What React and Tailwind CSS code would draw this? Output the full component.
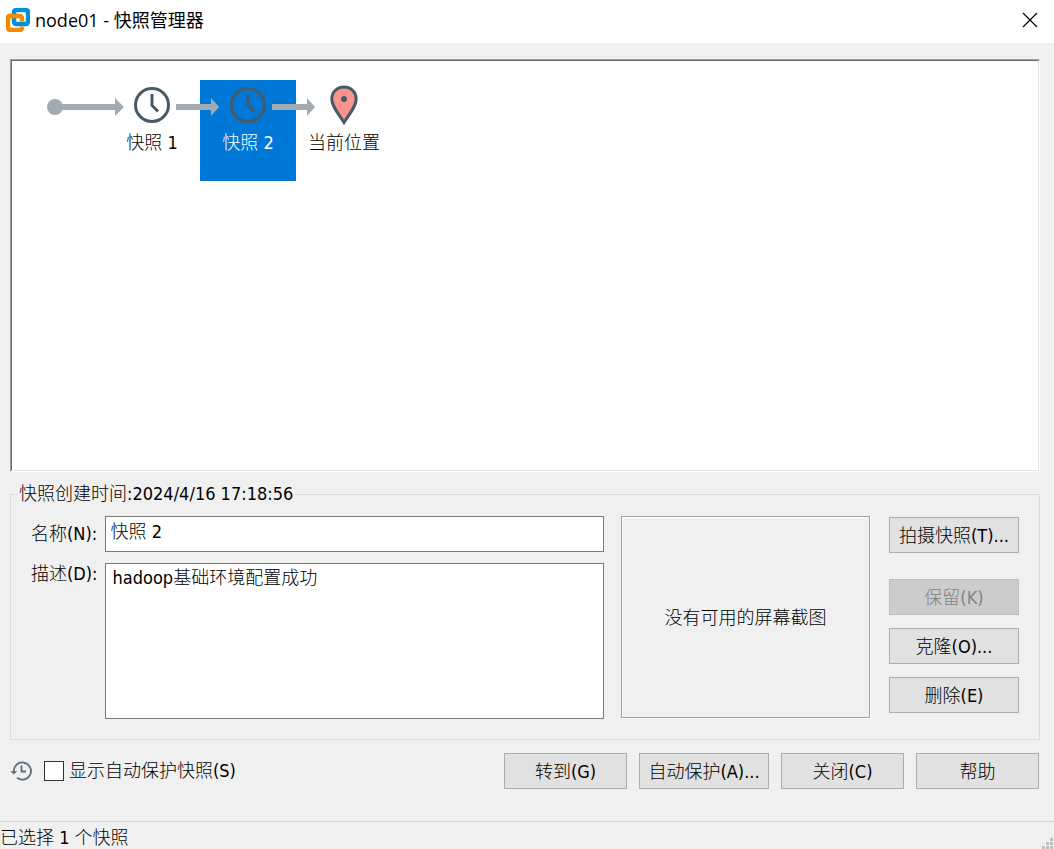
const SNAPSHOTS = [
  { id: "s1", label: "快照 1", icon: "clock", arrow: "start" },
  { id: "s2", label: "快照 2", icon: "clock", arrow: "next", selected: true },
  { id: "here", label: "当前位置", icon: "pin", arrow: "next" },
];

function Logo() {
  return (
    <svg className="size-6 shrink-0" viewBox="0 0 24 24" fill="none" aria-hidden="true">
      <rect x="2" y="8" width="14" height="14" rx="2" stroke="#f38b00" strokeWidth="4.4" />
      <rect x="8" y="2" width="14" height="14" rx="2" stroke="#fff" strokeOpacity="0.6" strokeWidth="6" />
      <rect x="8" y="2" width="14" height="14" rx="2" stroke="#0091da" strokeWidth="4.4" />
      <path d="M2 14V10Q2 8 4 8H12" stroke="#f38b00" strokeWidth="4.4" />
    </svg>
  );
}

function ClockIcon() {
  return (
    <svg className="size-10" viewBox="0 0 40 40" fill="none" stroke="#485a66" strokeWidth="3" aria-hidden="true">
      <circle cx="20" cy="20" r="16.5" />
      <path d="M20 9V20.5L26 26.5" />
    </svg>
  );
}

function PinIcon() {
  return (
    <svg className="size-10" viewBox="0 0 40 40" aria-hidden="true">
      <path
        d="M20 2C12.8 2 7.8 7.2 7.8 14C7.8 21 13.5 27.5 20 37.5C26.5 27.5 32.2 21 32.2 14C32.2 7.2 27.2 2 20 2Z"
        fill="#fc948e"
        stroke="#485a66"
        strokeWidth="3"
      />
      <circle cx="20" cy="14" r="3" fill="#485a66" />
    </svg>
  );
}

function Arrow({ kind }) {
  if (kind === "start") {
    return (
      <svg className="absolute top-4 right-[76px] z-10 h-[22px] w-[77px]" viewBox="0 0 77 22" fill="#a3abb2" aria-hidden="true">
        <circle cx="8" cy="11" r="8" />
        <path d="M8 8H68V2L77 11L68 20V14H8Z" />
      </svg>
    );
  }
  return (
    <svg className="absolute top-4 -left-6 z-10 h-[22px] w-11" viewBox="0 0 44 22" fill="#a3abb2" aria-hidden="true">
      <path d="M0 8H35V2L43 11L35 20V14H0Z" />
    </svg>
  );
}

function Button({ className = "", ...props }) {
  return (
    <button
      type="button"
      className={`h-9 border border-[#adadad] bg-[#e1e1e1] pt-0.5 text-center whitespace-nowrap disabled:border-[#bfbfbf] disabled:bg-[#cccccc] disabled:text-[#838383] ${className}`}
      {...props}
    />
  );
}

export default function App() {
  return (
    <div className="flex min-h-screen flex-col bg-[#f0f0f0] font-['DejaVu_Sans_Condensed','Noto_Sans_CJK_SC',sans-serif] text-[18px] leading-5 font-light text-black">
      <header className="flex h-[43px] items-center bg-white pr-4 pb-[3px] pl-1.5">
        <Logo />
        <h1 className="ml-[5px] flex-1 font-['Open_Sans','Noto_Sans_CJK_SC',sans-serif] text-[18px] leading-6 font-normal">
          node01 - 快照管理器
        </h1>
        <button type="button" aria-label="关闭窗口" className="size-4">
          <svg className="size-4" viewBox="0 0 16 16" stroke="#000" strokeWidth="1.2" aria-hidden="true">
            <path d="M1 1L15 15M15 1L1 15" />
          </svg>
        </button>
      </header>

      <main className="flex flex-1 flex-col pt-4 pr-[14px] pl-2.5">
        <section className="border border-t-[#a0a0a0] border-r-white border-b-white border-l-[#a0a0a0]">
          <ul className="flex h-[411px] border border-t-[#696969] border-r-[#e3e3e3] border-b-[#e3e3e3] border-l-[#696969] bg-white pt-[19px] pl-[92px]">
            {SNAPSHOTS.map((s) => (
              <li
                key={s.id}
                className={`relative flex h-[101px] w-24 flex-col items-center gap-2 pt-[5px] ${s.selected ? "bg-[#0078d7] text-white" : ""}`}
              >
                <Arrow kind={s.arrow} />
                {s.icon === "clock" ? <ClockIcon /> : <PinIcon />}
                <span className="whitespace-nowrap">{s.label}</span>
              </li>
            ))}
          </ul>
        </section>

        <fieldset className="mt-3 border border-[#dcdcdc] pt-3 pr-5 pb-5 pl-5">
          <legend className="-ml-[13px] px-px">快照创建时间:2024/4/16 17:18:56</legend>
          <div className="flex">
            <div className="grid flex-1 grid-cols-[auto_1fr] gap-x-[7px] gap-y-[11px]">
              <label htmlFor="name" className="pt-2">名称(N):</label>
              <input
                id="name"
                defaultValue="快照 2"
                className="h-9 w-full min-w-0 border border-[#7a7a7a] bg-white px-[5px] pb-2 outline-none"
              />
              <label htmlFor="desc" className="pt-px">描述(D):</label>
              <textarea
                id="desc"
                defaultValue="hadoop基础环境配置成功"
                className="h-[156px] w-full min-w-0 resize-none border border-[#7a7a7a] bg-white px-[7px] py-1 outline-none"
              />
            </div>
            <div className="ml-[17px] flex h-[202px] w-[249px] items-center justify-center border border-[#a0a0a0] pt-0.5 shadow-[1px_1px_0_#fff,inset_1px_1px_0_#fff]">
              没有可用的屏幕截图
            </div>
            <div className="ml-[19px] flex w-[130px] flex-col gap-[13px] pt-px">
              <Button className="mb-[13px]">拍摄快照(T)...</Button>
              <Button disabled>保留(K)</Button>
              <Button>克隆(O)...</Button>
              <Button>删除(E)</Button>
            </div>
          </div>
        </fieldset>

        <div className="mt-[13px] mr-px flex items-center gap-3">
          <svg className="size-[22px] shrink-0" viewBox="0 0 22 22" fill="none" stroke="#5f6b76" strokeWidth="1.8" aria-hidden="true">
            <path d="M3.8 12A8.6 8.6 0 1 1 7 17.8" />
            <path d="M1 11.5H6.6L3.8 14Z" fill="#5f6b76" strokeWidth="0.6" />
            <path d="M11.5 5.5V11.5H16" />
          </svg>
          <label className="flex flex-1 items-center gap-[5px]">
            <input type="checkbox" className="size-5 shrink-0 appearance-none border border-[#333] bg-white checked:bg-[#0078d7]" />
            显示自动保护快照(S)
          </label>
          <div className="flex gap-3">
            <Button className="w-[123px]">转到(G)</Button>
            <Button className="w-[130px]">自动保护(A)...</Button>
            <Button className="w-[123px]">关闭(C)</Button>
            <Button className="w-[123px]">帮助</Button>
          </div>
        </div>
      </main>

      <footer className="flex h-7 items-end justify-between border-t border-[#d7d7d7]">
        <span className="self-center pt-1">已选择 1 个快照</span>
        <svg className="h-3 w-3" viewBox="0 0 12 12" fill="#bfbfbf" aria-hidden="true">
          <path d="M8 1h3v3h-3zM4 5h3v3h-3zM8 5h3v3h-3zM0 9h3v3h-3zM4 9h3v3h-3zM8 9h3v3h-3z" />
        </svg>
      </footer>
    </div>
  );
}
